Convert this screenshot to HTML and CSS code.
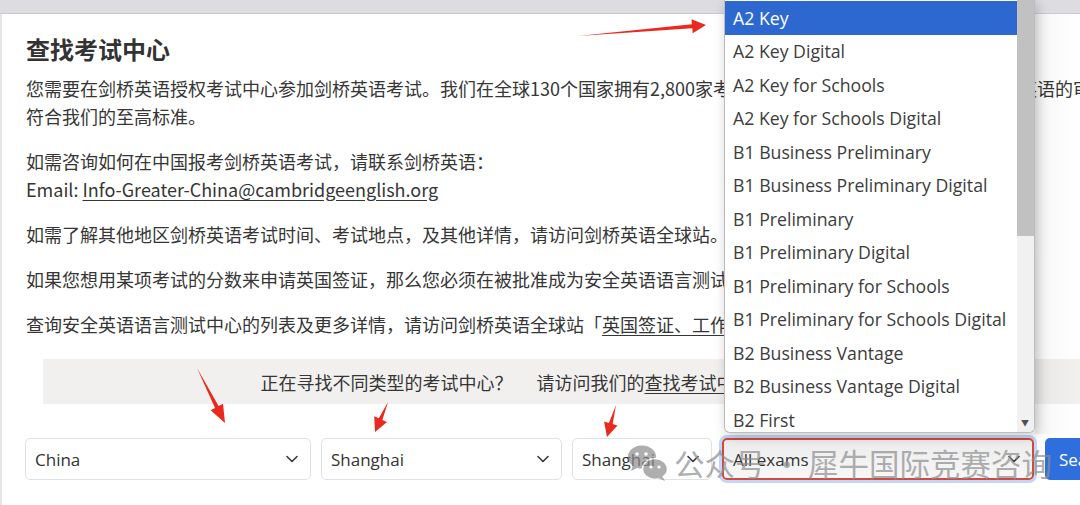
FILE: index.html
```html
<!DOCTYPE html>
<html lang="zh-CN">

<head>
    <meta charset="UTF-8">
    <meta name="viewport" content="width=device-width, initial-scale=1.0">
    <title>查找考试中心</title>
    <link rel="stylesheet" href="styles.css">
</head>

<body>
    <div class="topbar"></div>

    <main class="page">
        <h1>查找考试中心</h1>
        <p>您需要在剑桥英语授权考试中心参加剑桥英语考试。我们在全球130个国家拥有2,800家考试中心，所有考试中心均须经过剑桥英语的审核，符合我们的至高标准。</p>
        <p>如需咨询如何在中国报考剑桥英语考试，请联系剑桥英语：<br>
            Email: <a href="#">Info-Greater-China@cambridgeenglish.org</a></p>
        <p>如需了解其他地区剑桥英语考试时间、考试地点，及其他详情，请访问剑桥英语全球站。</p>
        <p>如果您想用某项考试的分数来申请英国签证，那么您必须在被批准成为安全英语语言测试中心的考点参加考试。</p>
        <p>查询安全英语语言测试中心的列表及更多详情，请访问剑桥英语全球站「<a href="#">英国签证、工作和学习</a>」。</p>

        <div class="notice">
            <span>正在寻找不同类型的考试中心？</span>
            <span class="notice-link">请访问我们的<a href="#">查找考试中心</a>页面查询更多信息。</span>
        </div>

        <form class="search-row">
            <div class="select select-country"><span>China</span>
                <svg width="12" height="8" viewBox="0 0 12 8"><path d="M1 1.5l5 5 5-5" fill="none" stroke="#343a40" stroke-width="1.6" stroke-linecap="round" stroke-linejoin="round"/></svg>
            </div>
            <div class="select select-region"><span>Shanghai</span>
                <svg width="12" height="8" viewBox="0 0 12 8"><path d="M1 1.5l5 5 5-5" fill="none" stroke="#343a40" stroke-width="1.6" stroke-linecap="round" stroke-linejoin="round"/></svg>
            </div>
            <div class="select select-city"><span>Shanghai</span>
                <svg width="12" height="8" viewBox="0 0 12 8"><path d="M1 1.5l5 5 5-5" fill="none" stroke="#343a40" stroke-width="1.6" stroke-linecap="round" stroke-linejoin="round"/></svg>
            </div>
            <div class="select select-exam focused"><span>All exams</span>
                <svg width="12" height="8" viewBox="0 0 12 8"><path d="M1 1.5l5 5 5-5" fill="none" stroke="#343a40" stroke-width="1.6" stroke-linecap="round" stroke-linejoin="round"/></svg>
            </div>
            <button type="button" class="btn-search">Search</button>
        </form>
    </main>

    <!-- open list of the exam select -->
    <div class="listbox">
        <div class="options">
            <div class="option selected">A2 Key</div>
            <div class="option">A2 Key Digital</div>
            <div class="option">A2 Key for Schools</div>
            <div class="option">A2 Key for Schools Digital</div>
            <div class="option">B1 Business Preliminary</div>
            <div class="option">B1 Business Preliminary Digital</div>
            <div class="option">B1 Preliminary</div>
            <div class="option">B1 Preliminary Digital</div>
            <div class="option">B1 Preliminary for Schools</div>
            <div class="option">B1 Preliminary for Schools Digital</div>
            <div class="option">B2 Business Vantage</div>
            <div class="option">B2 Business Vantage Digital</div>
            <div class="option">B2 First</div>
        </div>
        <div class="scrollbar">
            <div class="thumb"></div>
            <span class="arrow-down">&#9660;</span>
        </div>
    </div>
    <div class="list-shade"></div>

    <!-- annotation arrows -->
    <svg class="arrows" width="1080" height="505" viewBox="0 0 1080 505">
        <polygon points="578,36 692.3,28.2 692.7,33.2 706,25 691.5,19.2 691.9,24.2" />
        <polygon points="197,368 218.6,406.1 223,403.8 225,423 210.6,410.2 215,407.9" />
        <polygon points="388,402 382.4,419.9 387,421.9 375,432 374.2,416.3 378.8,418.3" />
        <polygon points="616,405 612.7,424 617.5,425.4 607,437 604.1,421.6 608.9,423" />
    </svg>

    <div class="watermark">
        <svg width="42" height="38" viewBox="0 0 42 38">
            <ellipse cx="15" cy="13" rx="14" ry="11.5" fill="#8c8c8c" />
            <path d="M6 21l-2 6 7-3.5z" fill="#8c8c8c" />
            <circle cx="10" cy="10" r="1.8" fill="#fff" />
            <circle cx="19" cy="10" r="1.8" fill="#fff" />
            <ellipse cx="28" cy="25" rx="12.5" ry="10.5" stroke="#fff" stroke-width="1.5" fill="#8c8c8c" />
            <path d="M35 32l3 5-7-3z" fill="#8c8c8c" />
            <circle cx="24" cy="23" r="1.6" fill="#fff" />
            <circle cx="32" cy="23" r="1.6" fill="#fff" />
        </svg>
        <span>公众号<span class="dot">·</span>犀牛国际竞赛咨询</span>
    </div>
</body>

</html>
```

FILE: styles.css
```css
*,
*::before,
*::after {
  box-sizing: border-box;
}

body {
  margin: 0;
  width: 1080px;
  height: 505px;
  overflow: hidden;
  position: relative;
  background: #fff;
  font-family: "Noto Sans CJK SC", "Noto Sans", sans-serif;
  color: #363636;
}

.topbar {
  height: 14px;
  background: #dcdce1;
  border-bottom: 1px solid #c9c9ce;
}

.page {
  width: 1132px;
  height: 491px;
  padding: 20px 0 0 26px;
  border-left: 2px solid #e6e6e6;
}

.page h1 {
  margin: 0 0 10px -2px;
  font-size: 24px;
  line-height: 30px;
  font-weight: 700;
  color: #333;
}

.page p {
  margin: 0 0 17px -2px;
  font-size: 18px;
  line-height: 28px;
}

.page a {
  color: inherit;
  text-decoration: underline;
  text-underline-offset: 3px;
}

.notice {
  margin: 21px 0 0 15px;
  height: 45px;
  background: #f2f0ef;
  display: flex;
  justify-content: center;
  align-items: center;
  font-size: 18px;
}

.notice-link {
  margin-left: 24px;
}

.search-row {
  display: flex;
  gap: 10px;
  margin: 34px 0 0 -3px;
}

.select {
  flex-shrink: 0;
  height: 42px;
  display: flex;
  align-items: center;
  justify-content: space-between;
  padding: 0 12px 0 9px;
  border: 1px solid #dee2e6;
  border-radius: 5px;
  background: #fff;
  font-family: "Open Sans", "Noto Sans", sans-serif;
  font-size: 17px;
  color: #333;
}

.select-country {
  width: 286px;
}

.select-region {
  width: 241px;
}

.select-city {
  width: 140px;
}

.select-exam {
  width: 312px;
  background: linear-gradient(180deg, #ececec, #f7f7f7);
}

.focused {
  border: 2px solid #cf4a3f;
  box-shadow: 0 0 0 3px #c3d6f6;
}

.btn-search {
  flex-shrink: 0;
  margin-left: 1px;
  width: 90px;
  height: 42px;
  border: 0;
  border-radius: 5px;
  background: #2f6fdd;
  color: #fff;
  font-family: "Open Sans", "Noto Sans", sans-serif;
  font-size: 17px;
  text-align: left;
  padding-left: 14px;
}

/* opened list */
.listbox {
  position: absolute;
  left: 724px;
  top: 0;
  width: 311px;
  height: 433px;
  display: flex;
  background: #fff;
  border: 1px solid #bdbdbd;
  border-top: 0;
  border-radius: 0 0 6px 6px;
  box-shadow: 2px 3px 12px rgba(0, 0, 0, 0.22);
  overflow: hidden;
}

.list-shade {
  position: absolute;
  left: 1035px;
  top: 14px;
  width: 45px;
  height: 420px;
  background: linear-gradient(90deg, rgba(0, 0, 0, 0.06), rgba(0, 0, 0, 0.02) 40%, rgba(0, 0, 0, 0));
  pointer-events: none;
}

.options {
  flex: 1;
  padding-top: 1px;
}

.option {
  height: 33.5px;
  display: flex;
  align-items: center;
  padding-left: 8px;
  font-family: "Open Sans", "Noto Sans", sans-serif;
  font-size: 17.7px;
  color: #3c3c3c;
  white-space: nowrap;
}

.option.selected {
  background: #2c68cf;
  color: #fff;
}

.scrollbar {
  width: 17px;
  background: #f1f1f1;
  position: relative;
}

.thumb {
  height: 236px;
  background: #c1c1c1;
}

.arrow-down {
  position: absolute;
  bottom: 4px;
  left: 4px;
  font-size: 8px;
  color: #505050;
}

.arrows {
  position: absolute;
  left: 0;
  top: 0;
  pointer-events: none;
}

.arrows polygon {
  fill: #ea2a1e;
}

.watermark {
  position: absolute;
  left: 627px;
  top: 441px;
  display: flex;
  align-items: center;
  gap: 5px;
  opacity: 0.7;
  pointer-events: none;
}

.watermark span {
  font-family: "Noto Sans CJK SC", sans-serif;
  font-size: 30.5px;
  color: #8e8e8e;
  white-space: nowrap;
}

.watermark .dot {
  margin: 0 6px;
}
```
